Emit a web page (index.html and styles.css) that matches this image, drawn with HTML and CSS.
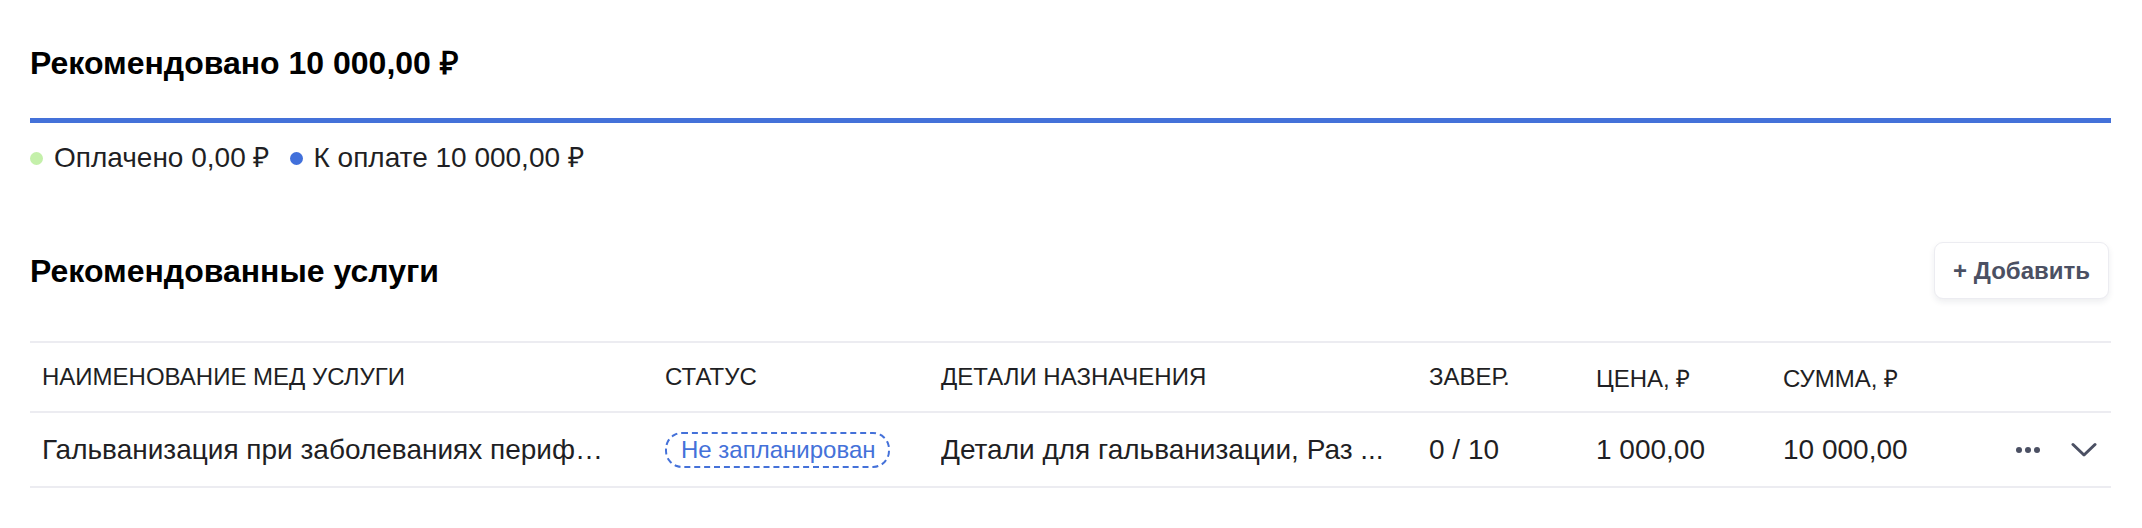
FILE: index.html
```html
<!DOCTYPE html>
<html lang="ru">
<head>
<meta charset="utf-8">
<title>Рекомендованные услуги</title>
<link rel="stylesheet" href="styles.css">
</head>
<body>
<div class="page">
  <section class="summary">
    <h1 class="summary-title">Рекомендовано 10 000,00 ₽</h1>
    <div class="progress"><div class="progress-fill"></div></div>
    <div class="legend">
      <span class="legend-item"><span class="dot dot-green"></span>Оплачено 0,00 ₽</span>
      <span class="legend-item"><span class="dot dot-blue"></span>К оплате 10 000,00 ₽</span>
    </div>
  </section>

  <section class="services">
    <div class="services-head">
      <h2 class="services-title">Рекомендованные услуги</h2>
      <button class="add-btn">+ Добавить</button>
    </div>
    <table class="grid">
      <colgroup>
        <col class="c-name"><col class="c-status"><col class="c-details"><col class="c-done"><col class="c-price"><col class="c-sum"><col class="c-actions">
      </colgroup>
      <thead>
        <tr>
          <th>Наименование мед услуги</th>
          <th>Статус</th>
          <th>Детали назначения</th>
          <th>Завер.</th>
          <th>Цена, ₽</th>
          <th>Сумма, ₽</th>
          <th></th>
        </tr>
      </thead>
      <tbody>
        <tr>
          <td><span class="clip">Гальванизация при заболеваниях периф…</span></td>
          <td><span class="badge">Не запланирован</span></td>
          <td><span class="clip">Детали для гальванизации, Раз ...</span></td>
          <td>0 / 10</td>
          <td>1 000,00</td>
          <td>10 000,00</td>
          <td class="actions">
            <div class="actions-inner">
              <span class="icon-more"><i></i><i></i><i></i></span>
              <svg class="icon-chevron" width="26" height="16" viewBox="0 0 26 16"><path d="M2 2.5 L13 13 L24 2.5" fill="none" stroke="#4b5063" stroke-width="3" stroke-linecap="round" stroke-linejoin="round"/></svg>
            </div>
          </td>
        </tr>
      </tbody>
    </table>
  </section>
</div>
</body>
</html>
```
FILE: styles.css
```css
* { box-sizing: border-box; }
html, body { margin: 0; padding: 0; background: #fff; }
body { font-family: "Liberation Sans", Arial, sans-serif; color: #1f1f24; }

.page { padding: 0 31px 0 30px; }

.summary { padding-top: 43px; }
.summary-title {
  margin: 0;
  font-size: 32px;
  line-height: 40px;
  font-weight: 700;
  color: #000;
}
.progress { margin-top: 35px; height: 5px; background: #e9ebf0; }
.progress-fill { width: 100%; height: 100%; background: #4471d9; }

.legend {
  display: flex;
  gap: 20px;
  margin-top: 17px;
  font-size: 28px;
  line-height: 36px;
  color: #1f1f24;
}
.legend-item { display: flex; align-items: center; }
.dot { width: 13px; height: 13px; border-radius: 50%; margin-right: 11px; display: inline-block; }
.dot-green { background: #c4f0aa; }
.dot-blue { background: #4170db; }

.services { margin-top: 66px; }
.services-head { display: flex; align-items: center; justify-content: space-between; }
.services-title { margin: 0; font-size: 32px; line-height: 40px; font-weight: 700; color: #000; }
.add-btn {
  font-family: inherit;
  font-size: 24px;
  font-weight: 700;
  color: #4b5063;
  background: #fff;
  border: 1.5px solid #ececf1;
  border-radius: 9px;
  height: 57px;
  padding: 0 18px;
  box-shadow: 0 3px 6px rgba(30, 35, 60, 0.08);
  margin-right: 2px;
}

.grid {
  width: 100%;
  margin-top: 42px;
  border-collapse: collapse;
  table-layout: fixed;
}
.c-name { width: 623px; }
.c-status { width: 276px; }
.c-details { width: 488px; }
.c-done { width: 167px; }
.c-price { width: 187px; }
.c-sum { width: 219px; }

.grid th, .grid td {
  padding: 0 12px;
  text-align: left;
  border-top: 2px solid #ececf1;
  border-bottom: 2px solid #ececf1;
  white-space: nowrap;
}
.grid th {
  height: 70px;
  font-size: 24px;
  font-weight: 400;
  text-transform: uppercase;
  color: #1f1f24;
}
.grid td {
  height: 75px;
  font-size: 28px;
  color: #1f1f24;
}
.clip { display: block; overflow: hidden; text-overflow: ellipsis; }

.badge {
  display: inline-block;
  font-size: 24px;
  line-height: 30px;
  padding: 1px 13px 1px 14px;
  color: #4471d9;
  border: 2px dashed #4471d9;
  border-radius: 17px;
}

.grid td.actions { padding-right: 14px; }
.actions-inner { display: flex; align-items: center; justify-content: flex-end; gap: 31px; }
.icon-more { display: flex; gap: 3px; }
.icon-more i { width: 6px; height: 6px; border-radius: 50%; background: #4b5063; display: block; }
.icon-chevron { display: block; }
```
